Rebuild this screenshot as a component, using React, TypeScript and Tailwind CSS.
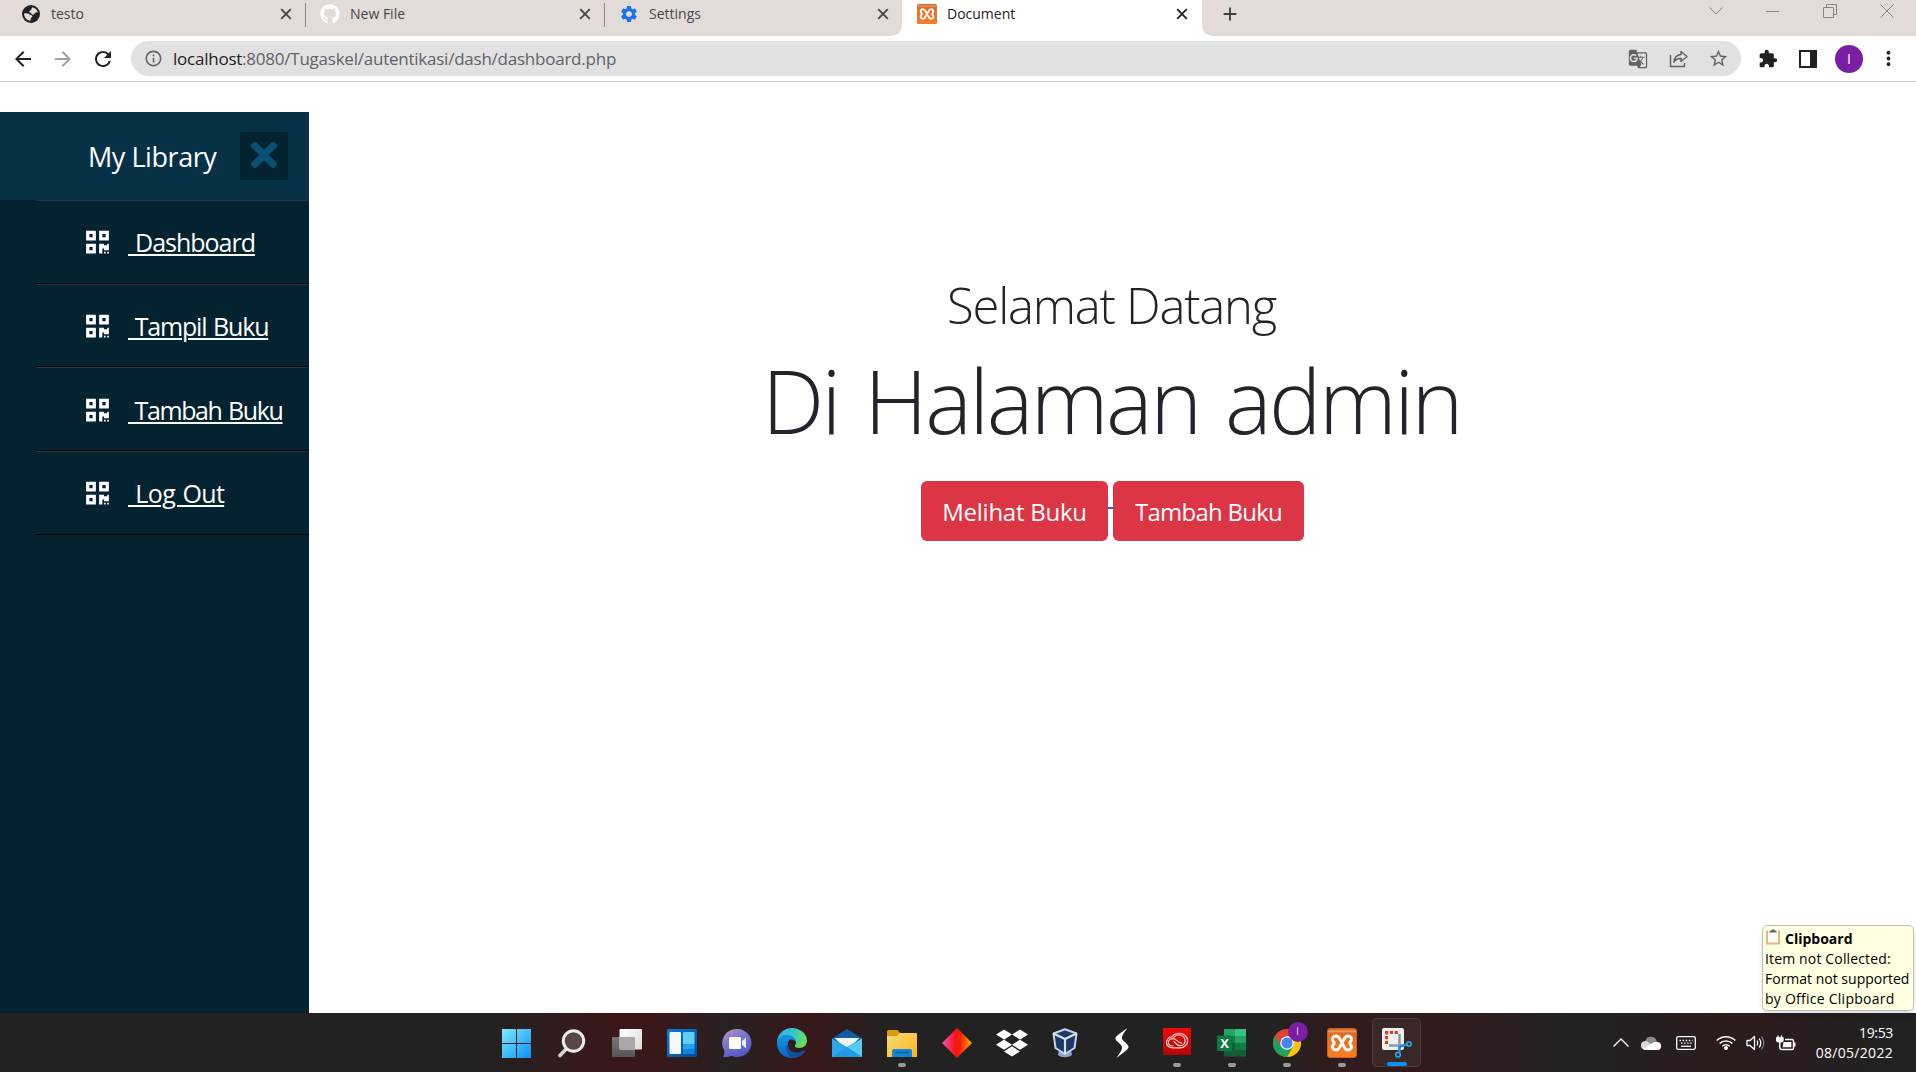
import type { ReactNode } from "react";
import { FaDropbox, FaGithub, FaQrcode, FaTimes } from "react-icons/fa";
import {
  MdArrowBack, MdArrowForward, MdExtension, MdGTranslate, MdInfoOutline,
  MdMoreVert, MdRefresh, MdSettings, MdStarBorder, MdAdd,
} from "react-icons/md";

function Globe() {
  return (
    <svg viewBox="0 0 20 20" className="size-5">
      <circle cx="10" cy="10" r="9" fill="#202124" />
      <path d="M11.500 3.200C14 4 16 5.500 16.700 8c-1 .8-1.700.2-2.500.8-.9.800-.8 2-2.200 2-1.800 0-1.300-1.800-3-2.200-1-.3-1.200-1.500-.2-1.900C10.300 6.200 10.500 4.500 11.500 3.200z" fill="#e3dbd8" />
      <path d="M3 9.500c2-.3 4-.1 5.200.8 1 .9 2.600.7 3.100 1.700.4 1.200-1 1.300-1.500 2.200-.4.800.2 1.800-.4 2.600C6 16.500 3 13.500 3 9.500z" fill="#e3dbd8" />
    </svg>
  );
}

function CloseX() {
  return (
    <svg viewBox="0 0 12 12" className="ml-auto size-3" fill="none" stroke="currentColor" strokeWidth="1.900">
      <path d="M1.200 1.200l9.600 9.600M10.800 1.200l-9.600 9.600" />
    </svg>
  );
}

function Xampp({ className }: { className: string }) {
  return (
    <svg viewBox="0 0 30 30" className={className}>
      <defs>
        <linearGradient id="xamppFill" x1="0" y1="0" x2="0" y2="1">
          <stop offset="0" stopColor="#c75c1c" /><stop offset=".1" stopColor="#f09a5a" />
          <stop offset=".16" stopColor="#e06a1f" /><stop offset="1" stopColor="#fb7f26" />
        </linearGradient>
      </defs>
      <rect x=".5" y=".5" width="29" height="29" rx="2.500" fill="url(#xamppFill)" stroke="#c9611d" />
      <path
        d="M15 14C13 14 13 8 9.200 8 6 8 4.800 10.500 5.800 12.500 6.300 13.800 7.300 14 7.300 15S6.300 16.200 5.800 17.500C4.800 19.500 6 22 9.200 22 13 22 13 16 15 16S17 22 20.800 22C24 22 25.200 19.500 24.200 17.500 23.700 16.200 22.700 16 22.700 15S23.700 13.800 24.200 12.500C25.200 10.500 24 8 20.800 8 17 8 17 14 15 14z"
        fill="none" stroke="#fff" strokeWidth="2.900" strokeLinejoin="round"
      />
    </svg>
  );
}

function Tab({ icon, title, className }: { icon: ReactNode; title: string; className: string }) {
  return (
    <div className={`flex h-[28px] items-center ${className}`}>
      <span className="flex size-5 items-center justify-center">{icon}</span>
      <span className="ml-[10px] text-[14px] leading-[27px] pb-px">{title}</span>
      <CloseX />
    </div>
  );
}

function BrowserTabs() {
  return (
    <div className="flex h-9 bg-white">
      <div className="flex h-9 w-[902px] rounded-br-[10px] bg-[#e3dbd8] text-[#45484c]">
        <Tab className="w-[305px] pl-[21px] pr-[13px]" title="testo" icon={<Globe />} />
        <div className="mt-[3px] h-6 w-px bg-[#8d8987]" />
        <Tab className="w-[298px] pl-[14px] pr-[13px]" title="New File" icon={<FaGithub className="size-5 text-white" />} />
        <div className="mt-[3px] h-6 w-px bg-[#8d8987]" />
        <Tab className="w-[297px] pl-[14px] pr-[13px]" title="Settings" icon={<MdSettings className="size-5 text-[#1a73e8]" />} />
      </div>
      <Tab className="w-[300px] pl-[15px] pr-[14px] text-[#202124]" title="Document" icon={<Xampp className="size-5" />} />
      <div className="flex flex-1 rounded-bl-[10px] bg-[#e3dbd8]">
        <MdAdd className="ml-[17px] mt-[3px] size-[22px] text-[#3c4043]" />
        <div className="ml-auto flex h-[22px] items-center text-[#8b8684]">
          <span className="flex w-[57px] justify-center"><svg viewBox="0 0 14 8" className="w-[14px]" fill="none" stroke="currentColor"><path d="M.5 .5 7 7l6.500-6.500" /></svg></span>
          <span className="flex w-[57px] justify-center"><span className="h-px w-[13px] bg-current" /></span>
          <span className="flex w-[57px] justify-center"><svg viewBox="0 0 14 14" className="size-[14px]" fill="none" stroke="currentColor"><path d="M.5 3.500h10v10h-10zM3.500 3V.5h10v10H11" /></svg></span>
          <span className="flex w-[58px] justify-center"><svg viewBox="0 0 14 14" className="size-[14px]" fill="none" stroke="currentColor"><path d="M.5 .5l13 13M13.500 .5l-13 13" /></svg></span>
        </div>
      </div>
    </div>
  );
}

function Slot({ children }: { children: ReactNode }) {
  return <span className="flex w-10 items-center justify-center">{children}</span>;
}

function Toolbar() {
  return (
    <div className="flex h-[46px] items-center border-b border-[#c9c9c9] bg-white pl-[3px] text-[#202124]">
      <Slot><MdArrowBack className="size-6" /></Slot>
      <Slot><MdArrowForward className="size-6 text-[#a0a2a4]" /></Slot>
      <Slot><MdRefresh className="size-6" /></Slot>
      <div className="ml-2 flex h-[35px] w-[1610px] items-center rounded-full bg-[#e1e1e1] pl-[13px] pr-[3px] text-[#5f6368]">
        <MdInfoOutline className="size-[19px]" />
        <span className="ml-[10px] text-[17px] tracking-[-0.235px] leading-[34px]">
          <span className="text-[#202124]">localhost</span>:8080/Tugaskel/autentikasi/dash/dashboard.php
        </span>
        <div className="ml-auto flex">
          <Slot><MdGTranslate className="size-5" /></Slot>
          <Slot>
            <svg viewBox="0 0 20 18" className="ml-0.5 w-5" fill="none" stroke="currentColor" strokeWidth="1.500" strokeLinejoin="round">
              <path d="M1.500 5v11.500h14V13M12 1.500l6 5-6 5V8.500C8.500 8.300 6.500 9.500 5 12c.3-4 2.600-7 7-7.500z" />
            </svg>
          </Slot>
          <Slot><MdStarBorder className="size-[21px]" /></Slot>
        </div>
      </div>
      <div className="ml-[7px] flex items-center">
        <Slot><MdExtension className="size-5" /></Slot>
        <Slot><span className="h-[18px] w-[18px] border-2 border-r-[7px] border-[#202124]" /></Slot>
        <Slot><span className="ml-0.5 flex size-7 items-center justify-center rounded-full bg-[#7b1fa2] text-[14px] text-white">I</span></Slot>
        <Slot><MdMoreVert className="size-[23px]" /></Slot>
      </div>
    </div>
  );
}

function MenuItem({ label, tracking }: { label: string; tracking: string }) {
  return (
    <li className="flex h-[83.670px] items-center border-b border-t border-b-black border-t-white/10 pl-[49.500px]">
      <FaQrcode className="mt-px h-[26px] w-[23px]" />
      <a className={`ml-[19.500px] mt-px whitespace-pre text-[25px] leading-9 underline decoration-2 underline-offset-[2px] [word-spacing:1.500px] ${tracking}`}>{"\u00a0" + label}</a>
    </li>
  );
}

function Sidebar() {
  return (
    <aside className="mt-[30px] h-[901px] w-[309px] bg-[#042331] text-white">
      <header className="flex h-[88px] items-center bg-[#063146] pl-[88px] pr-[21px]">
        <span className="pt-0.5 text-[27px] leading-[38px] tracking-[-0.450px]">My Library</span>
        <span className="ml-auto flex size-12 items-center justify-center rounded-[3px] bg-[#042331] pb-0.5">
          <FaTimes className="size-[38px] text-[#0a5275]" />
        </span>
      </header>
      <ul className="ml-9">
        <MenuItem label="Dashboard" tracking="tracking-[-1px]" />
        <MenuItem label="Tampil Buku" tracking="tracking-[-1.200px]" />
        <MenuItem label="Tambah Buku" tracking="tracking-[-1.400px]" />
        <MenuItem label="Log Out" tracking="tracking-[-0.650px]" />
      </ul>
    </aside>
  );
}

function Main() {
  return (
    <main className="flex flex-1 flex-col items-center pt-[193px] text-[#212529]">
      <h2 className="pr-0.5 text-[49px] font-light leading-[60px] tracking-[-1.25px]">Selamat Datang</h2>
      <h1 className="mt-[15px] pr-0.5 text-[88px] font-light leading-[100px] tracking-[-2.500px] [word-spacing:5px]">Di Halaman admin</h1>
      <div className="mt-[31px] flex h-[60px] text-[24px] text-white">
        <a className="flex w-[187px] items-center justify-center rounded-[6px] bg-[#dc3545] pt-0.5 tracking-[-0.250px]">Melihat Buku</a>
        <span className="mt-[26px] h-0.5 w-[5px] bg-[#0d6efd]" />
        <a className="flex w-[191px] items-center justify-center rounded-[6px] bg-[#dc3545] pt-0.5 tracking-[-0.750px]">Tambah Buku</a>
      </div>
    </main>
  );
}

function WindowsLogo() {
  return (
    <svg viewBox="0 0 29 29" className="mt-px size-[29px]">
      <defs><linearGradient id="win" x1="0" y1="0" x2="1" y2="1"><stop stopColor="#7eeafd" /><stop offset="1" stopColor="#0a90f5" /></linearGradient></defs>
      <path d="M0 0h14v14H0zM15 0h14v14H15zM0 15h14v14H0zM15 15h14v14H15z" fill="url(#win)" />
    </svg>
  );
}
function Search() {
  return (
    <svg viewBox="0 0 30 30" className="size-[30px]">
      <path d="M11 19 3 27.500" stroke="#d5d5d5" strokeWidth="3.600" strokeLinecap="round" />
      <circle cx="16.500" cy="13" r="10.200" fill="#574746" stroke="#eeeded" strokeWidth="3" />
    </svg>
  );
}
function TaskView() {
  return (
    <svg viewBox="0 0 30 28" className="w-[30px]">
      <defs>
        <linearGradient id="tvA" x1="0" y1="0" x2="1" y2="1"><stop stopColor="#fff" /><stop offset="1" stopColor="#ddd" /></linearGradient>
        <linearGradient id="tvB" x1="0" y1="0" x2="0" y2="1"><stop stopColor="#777" /><stop offset="1" stopColor="#555" /></linearGradient>
      </defs>
      <rect y="8" width="23" height="20" rx="1" fill="url(#tvB)" />
      <rect x="7.500" width="22.500" height="20.500" rx="1" fill="url(#tvA)" />
      <rect x="7.500" y="8" width="15.500" height="12.500" fill="#a9a7a7" />
    </svg>
  );
}
function Widgets() {
  return (
    <svg viewBox="0 0 30 28" className="w-[30px]">
      <defs><linearGradient id="wd" x1="0" y1="0" x2="1" y2="1"><stop stopColor="#0b7bd8" /><stop offset="1" stopColor="#084a94" /></linearGradient></defs>
      <rect width="30" height="28" rx="1.500" fill="url(#wd)" />
      <rect x="2.500" y="3" width="11.500" height="22" rx="1" fill="#f5f8fc" />
      <rect x="16" y="3" width="11.500" height="12.500" rx="1" fill="#5fd0fb" />
      <rect x="16" y="15.500" width="11.500" height="5" fill="#1ea7fa" />
      <rect x="16" y="20.500" width="11.500" height="4.500" fill="#0f84e6" />
    </svg>
  );
}
function Chat() {
  return (
    <svg viewBox="0 0 30 30" className="size-[30px]">
      <defs><linearGradient id="ch" x1=".2" y1="0" x2=".8" y2="1"><stop stopColor="#b08fb8" /><stop offset=".4" stopColor="#7777cf" /><stop offset="1" stopColor="#4f50c4" /></linearGradient></defs>
      <path d="M15.500 1a14 14 0 1 1-6 26.700C7 29 4 29 1 29c1.500-2.500 1.500-4.500 1.200-7A14 14 0 0 1 15.500 1z" fill="url(#ch)" />
      <rect x="7" y="9" width="12" height="12" rx="1.500" fill="#fff" />
      <path d="M20 13l4-3.500v11L20 17z" fill="#e8e6f8" />
    </svg>
  );
}
function Edge() {
  return (
    <svg viewBox="0 0 30 30" className="size-[30px]">
      <defs>
        <linearGradient id="eg1" x1="0" y1=".3" x2="1" y2=".6"><stop stopColor="#2fb0e8" /><stop offset=".5" stopColor="#36c6c8" /><stop offset="1" stopColor="#6fe04a" /></linearGradient>
        <linearGradient id="eg2" x1="0" y1="0" x2="0" y2="1"><stop stopColor="#1398e0" /><stop offset="1" stopColor="#0c64c0" /></linearGradient>
      </defs>
      <path d="M0 15C0 6 7 0 15 0s15 5.800 15 12.500c0 4.500-3.200 7.500-7.500 7.500-3 0-4.700-1-4.700-2 0-.8 1.200-1.400 1.200-3.500C19 11 15.500 8.200 11 8.200 5 8.200 1 12 0 15z" fill="url(#eg1)" />
      <path d="M0 15c.5-4.500 4.500-8 10-8 5 0 9 3 9 7.500-1-2-3-3-5-3-4 0-4 7-.5 11.500 2 3 5.500 4.500 6.500 5-1.500 1.300-3 2-5 2C6 30 0 23.500 0 15z" fill="url(#eg2)" />
      <path d="M11 14.500c-1.500 6 3 10 8.500 10 4 0 6-1.300 7.500-1.900 1-.4 1.200.2.800 1C25.500 27.500 21 30 15.500 30 9.500 28 7.500 19 11 14.500z" fill="#12509b" />
    </svg>
  );
}
function Mail() {
  return (
    <svg viewBox="0 0 30 28" className="w-[30px]">
      <path d="M0 9.500 15 0l15 9.500v4H0z" fill="#0f5ca8" />
      <path d="M2.500 9h25L15 21z" fill="#f2f2f4" />
      <path d="M0 9.500 15 18l15-8.500V28H0z" fill="#2ba9ea" />
      <path d="M0 28 30 9.500V28z" fill="#54cbf7" />
      <path d="M0 28 15 18l15 10z" fill="#1e9be4" />
    </svg>
  );
}
function Folder() {
  return (
    <svg viewBox="0 0 30 27" className="mt-px w-[30px]">
      <defs><linearGradient id="fd" x1="0" y1="0" x2="1" y2="1"><stop stopColor="#fddc74" /><stop offset="1" stopColor="#f7b51b" /></linearGradient></defs>
      <path d="M0 1.500Q0 0 1.500 0h9L13 3v4H0z" fill="#dc9a12" />
      <path d="M0 6h10l3-3h16q1 0 1 1v23H0z" fill="url(#fd)" />
      <path d="M5 27v-6q0-2 2-2h16q2 0 2 2v6z" fill="#1585d8" />
      <path d="M8.500 22.500h13" stroke="#0a56a0" strokeWidth="1.400" />
    </svg>
  );
}
function Diamond() {
  return (
    <svg viewBox="0 0 30 30" className="size-[30px]">
      <defs><linearGradient id="dm"><stop stopColor="#f44fc0" /><stop offset=".45" stopColor="#fa1411" /><stop offset=".6" stopColor="#fb1a08" /><stop offset="1" stopColor="#f4b400" /></linearGradient></defs>
      <path d="M15 0l15 15-15 15L0 15z" fill="url(#dm)" />
    </svg>
  );
}
function VirtualBox() {
  return (
    <svg viewBox="0 0 26 30" className="mr-[3px] h-[30px]">
      <path d="M7 22h12l1 5c-3 3-11 3-14 0z" fill="#8fa4c8" />
      <path d="M13 1.200 24.500 5.500 22.500 20 13 26 3.500 20 1.500 5.500z" fill="#1c3866" stroke="#c9d4e8" strokeWidth="2" strokeLinejoin="round" />
      <path d="M1.500 5.500 13 11l11.500-5.500M13 11v15" fill="none" stroke="#d9e1f0" strokeWidth="2.200" />
    </svg>
  );
}
function Swoosh() {
  return (
    <svg viewBox="0 0 14 30" className="h-[30px]">
      <path d="M12.500 0C4 6 0 8.500.5 11c.5 2.500 6 5 6.500 8 .3 3-2 6-5.500 11 7.500-6 12.500-9 12-11.500C13 16 7.500 13 7 10.500 6.700 7.500 9 5 12.500 0z" fill="#fff" />
    </svg>
  );
}
function CreativeCloud() {
  return (
    <svg viewBox="0 0 28 27" className="mb-[3px] w-7">
      <defs><linearGradient id="cc" x1="0" y1="0" x2="0" y2="1"><stop stopColor="#f30808" /><stop offset="1" stopColor="#b00505" /></linearGradient></defs>
      <rect width="28" height="27" fill="url(#cc)" />
      <g fill="none" stroke="#ffd0cc" strokeWidth="1.200">
        <path d="M10 19.800C6 19.800 3.500 17.500 3.500 14.500S6 9 9 8.800C11 6.300 13.500 5.300 16 5.300c5 0 8.700 3.300 8.700 7.400 0 4.100-3.400 7.100-7.700 7.100z" />
        <path d="M10.500 18C7.500 18 5.300 16.500 5.300 14.500s2-3.900 4.700-3.900c3.500 0 4.500 4.500 9 4.500" />
        <path d="M10.500 9.700c3-4 9.500-3.500 11.300 1 1.400 4-1.300 7.300-5.300 7-2.500-.3-4-3-6-4.500" />
      </g>
    </svg>
  );
}
function Excel() {
  return (
    <span className="relative flex h-7 w-[29px]">
      <svg viewBox="0 0 29 28" className="w-[29px]">
        <rect x="7" width="11" height="7" fill="#21a366" /><rect x="18" width="11" height="7" fill="#33c481" />
        <rect x="7" y="7" width="11" height="7" fill="#107c41" /><rect x="18" y="7" width="11" height="7" fill="#21a366" />
        <rect x="7" y="14" width="11" height="7" fill="#185c37" /><rect x="18" y="14" width="11" height="7" fill="#107c41" />
        <rect x="7" y="21" width="22" height="6.500" fill="#185c37" />
        <rect y="6.500" width="15" height="15.500" rx="1" fill="#0f7a40" />
      </svg>
      <span className="absolute left-0 top-[6px] w-[15px] text-center text-[13px] font-bold leading-4 text-white">X</span>
    </span>
  );
}
function Chrome() {
  return (
    <span className="relative flex">
      <svg viewBox="0 0 30 30" className="size-7">
        <circle cx="15" cy="15" r="15" fill="#dd4437" />
        <path d="M2 7.500A15 15 0 0 0 15 30l6.500-11.300L15 15 8.500 18.700z" fill="#1fa15d" />
        <path d="M28 7.500H15V15l6.500 3.700L15 30A15 15 0 0 0 28 7.500z" fill="#fdc60a" />
        <circle cx="15" cy="15" r="7.300" fill="#f2f4f8" /><circle cx="15" cy="15" r="5.900" fill="#4285f4" />
      </svg>
      <span className="absolute left-[15px] top-[-7px] flex size-5 items-center justify-center rounded-full bg-[#7b1fa2] text-[11px] text-[#d9c2e6]">I</span>
    </span>
  );
}
function Snip() {
  return (
    <svg viewBox="0 0 30 30" className="size-[30px]">
      <rect width="22" height="22" rx="2" fill="#eef0f4" />
      <path d="M4.500 16V4.500M3 4.500h14" fill="none" stroke="#d8431a" strokeWidth="3" strokeDasharray="3.200 1.600" />
      <path d="M17.500 6v14M7 17.500h14" stroke="#8f969e" strokeWidth="2.500" />
      <path d="M17.500 18v6.500M18 18.500l7-2" stroke="#1a8fdc" strokeWidth="2.500" />
      <circle cx="16" cy="26.700" r="2.300" fill="none" stroke="#27a5ee" strokeWidth="1.700" />
      <circle cx="27" cy="16" r="2.200" fill="none" stroke="#27a5ee" strokeWidth="1.700" />
    </svg>
  );
}

const apps: { icon: ReactNode; state?: "open" | "active" }[] = [
  { icon: <WindowsLogo /> }, { icon: <Search /> }, { icon: <TaskView /> }, { icon: <Widgets /> },
  { icon: <Chat /> }, { icon: <Edge /> }, { icon: <Mail /> }, { icon: <Folder />, state: "open" },
  { icon: <Diamond /> }, { icon: <FaDropbox className="size-8 text-white" /> }, { icon: <VirtualBox /> },
  { icon: <Swoosh /> }, { icon: <CreativeCloud />, state: "open" }, { icon: <Excel />, state: "open" },
  { icon: <Chrome />, state: "open" }, { icon: <Xampp className="size-[30px]" />, state: "open" },
  { icon: <Snip />, state: "active" },
];

function Tray() {
  return (
    <div className="ml-[182px] flex flex-1 items-center text-white">
      <span className="flex w-[30px] justify-center"><svg viewBox="0 0 16 9" className="w-4" fill="none" stroke="currentColor" strokeWidth="1.300"><path d="M.5 8.500 8 1l7.500 7.500" /></svg></span>
      <span className="flex w-[30px] justify-center">
        <svg viewBox="0 0 20 14" className="w-5">
          <path d="M4 6a6 6 0 0 1 11.500-1.500L17 8 6 10z" fill="#8b8b8b" />
          <path d="M4 5a4.500 4.500 0 0 0 .5 9H16a4 4 0 0 0 .5-8C14 6 12 8 10 8.500 8.500 7 7 5 4 5z" fill="#d9d9d9" />
          <path d="M2 13l10-6.500c2-1 6-1 7.700 2.500.8 2.500-1 5-3.700 5H4.500z" fill="#fff" />
        </svg>
      </span>
      <span className="flex w-[40px] justify-center">
        <svg viewBox="0 0 20 14" className="w-5" fill="none" stroke="currentColor" strokeWidth="1.300">
          <rect x=".7" y=".7" width="18.600" height="12.600" rx="1.500" />
          <path d="M3.500 4.500h13M5 7.200h11" strokeDasharray="1.500 1.600" /><path d="M5 10.300h10" />
        </svg>
      </span>
      <span className="ml-[5px] flex w-[30px] justify-center">
        <svg viewBox="0 0 20 15" className="w-5" fill="none" stroke="currentColor" strokeWidth="1.400">
          <path d="M.7 5.500c5.200-5 13.400-5 18.600 0M3.600 8.600c3.600-3.500 9.200-3.500 12.800 0M6.300 11.300c2.100-2 5.300-2 7.400 0" />
          <circle cx="10" cy="13" r="1.300" fill="currentColor" />
        </svg>
      </span>
      <span className="flex w-[30px] justify-center">
        <svg viewBox="0 0 20 16" className="w-5" fill="none" stroke="currentColor" strokeWidth="1.300">
          <path d="M1 5.500h3L8.500 1.500v13L4 10.500H1z" strokeLinejoin="round" />
          <path d="M11 5.500q1.600 2.500 0 5M13.200 3.500q3 4.500 0 9" /><path d="M15.500 1.500q4.500 6.500 0 13" stroke="#777" />
        </svg>
      </span>
      <span className="flex w-[30px] justify-center">
        <svg viewBox="0 0 20 16" className="w-5" fill="none" stroke="currentColor" strokeWidth="1.400">
          <path d="M2 .5V3M5.500 .5V3" /><path d="M.5 3h6.500v2q0 2-3.200 2T.5 5z" fill="currentColor" />
          <path d="M3.800 7v5q0 2.500 2 2.500H16q1.500 0 1.500-1.500V6q0-1.500-1.500-1.500H9M18.800 7.500v4" />
          <path d="M7.500 7h7.800v5.200H6.500z" fill="currentColor" stroke="none" />
        </svg>
      </span>
      <div className="ml-auto pr-[23px] text-right text-[14px] leading-5">
        <div className="tracking-[-0.350px]">19:53</div>
        <div className="tracking-[0.300px]">08/05/2022</div>
      </div>
    </div>
  );
}

function Taskbar() {
  return (
    <footer className="flex h-[59px] items-center bg-[linear-gradient(90deg,#222_0,#222_480px,#3a1819_610px,#3a1819_655px,#272122_730px,#3a1819_810px,#232222_890px,#222_1270px,#301c1d_1330px,#301c1d_1440px,#222_1590px,#2b1c1c_1710px,#2b1d1d_1780px,#222_1890px)] pl-[489px]">
      {apps.map((app, i) => (
        <div key={i} className="flex w-[55px] justify-center">
          <div className={`relative flex h-[49px] w-[49px] items-center justify-center rounded-[5px] ${app.state === "active" ? "border border-white/10 bg-white/5" : ""}`}>
            {app.icon}
            {app.state === "open" && <span className="absolute bottom-0 left-[20.500px] h-1 w-2 rounded-full bg-[#9a9898]" />}
            {app.state === "active" && <span className="absolute bottom-0 left-[14px] h-1 w-5 rounded-full bg-[#0a90fb]" />}
          </div>
        </div>
      ))}
      <Tray />
    </footer>
  );
}

function ClipboardTip() {
  return (
    <div className="absolute left-[1762px] top-[925px] h-[86px] w-[152px] whitespace-nowrap rounded-[5px] border border-[#c0c0c0] bg-[#ffffe1] pl-[2px] pt-[3px] text-[14px] leading-5 text-black shadow-md">
      <div className="flex items-start">
        <svg viewBox="0 0 14 16" className="ml-px w-[14px]">
          <path d="M1 1.500v13h12v-13" fill="#fff" stroke="#e5b778" strokeWidth="2" />
          <path d="M3.500 3.500V2L5 1.500 7 0l2 1.500 1.500.5v1.500z" fill="#666" />
        </svg>
        <span className="ml-[5px] font-bold">Clipboard</span>
      </div>
      <div className="tracking-[0.150px]">Item not Collected:</div>
      <div>Format not supported</div>
      <div className="tracking-[0.250px]">by Office Clipboard</div>
    </div>
  );
}

export default function App() {
  return (
    <div className="relative h-[1072px] w-[1916px] overflow-hidden bg-white font-['Open_Sans','Noto_Sans',sans-serif]">
      <BrowserTabs />
      <Toolbar />
      <div className="flex h-[931px]">
        <Sidebar />
        <Main />
      </div>
      <Taskbar />
      <ClipboardTip />
    </div>
  );
}
